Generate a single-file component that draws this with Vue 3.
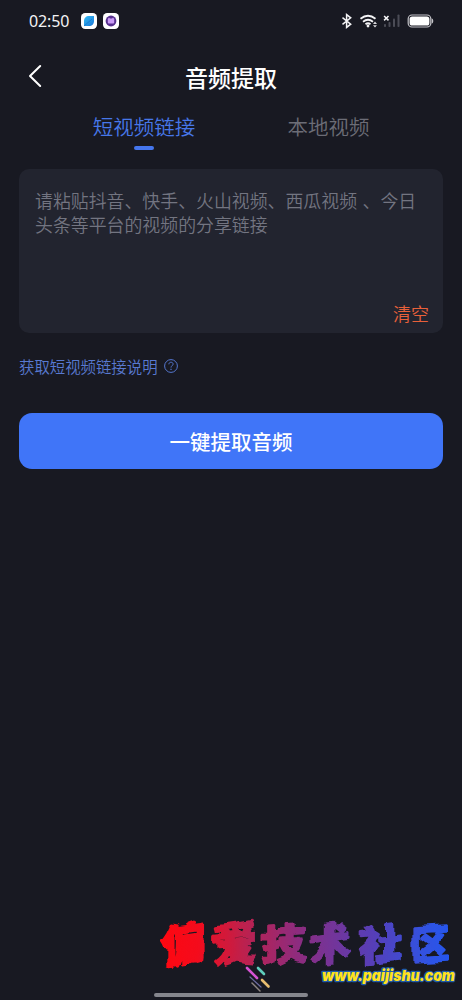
<script setup>
import { ref } from 'vue'

const tabs = ['短视频链接', '本地视频']
const active = ref(0)

// Each brush character rises to the right around its own centre.
const brand = [
  { char: '偏', x: 34, y: 51, size: 45, slope: -0.14 },
  { char: '爱', x: 85, y: 50, size: 45, slope: -0.1 },
  { char: '技', x: 133.5, y: 50, size: 43, slope: -0.08 },
  { char: '术', x: 180, y: 50, size: 42, slope: -0.12 },
  { char: '社', x: 231, y: 50, size: 42, slope: -0.1 },
  { char: '区', x: 280, y: 49, size: 39, slope: -0.06 },
].map((g) => ({ ...g, transform: `matrix(1 ${g.slope} 0 1 0 ${-g.slope * g.x})` }))
</script>

<template>
  <main class="screen">
    <div class="status">
      <span class="time">02:50</span>
      <svg class="app-icon" viewBox="0 0 16 16">
        <defs>
          <linearGradient id="leaf" x1="0" y1="0" x2="1" y2="1">
            <stop offset="0" stop-color="#35bdf4" /><stop offset="1" stop-color="#1976d8" />
          </linearGradient>
        </defs>
        <rect width="16" height="16" rx="4.2" fill="#fff" />
        <path d="M3 13V8C3 5 5 3 8 3h5v5c0 3-2 5-5 5H3z" fill="url(#leaf)" />
        <path d="M3 13L11 6" stroke="#1673cb" stroke-width=".7" />
      </svg>
      <svg class="app-icon" viewBox="0 0 16 16">
        <rect width="16" height="16" rx="4.2" fill="#fff" />
        <circle cx="8" cy="8" r="5.4" fill="#57308f" />
        <rect x="4.8" y="5.4" width="6.4" height="5" rx="1" fill="#c99af5" />
        <path d="M5 6l1-1.4 1 1.4h2l1-1.4 1 1.4" fill="#c99af5" />
      </svg>
      <svg class="system" viewBox="0 0 94 16">
        <path d="M2.5 4.6l8.2 6.6L6.6 14.4V1.6l4.1 3.2-8.2 6.6" fill="none" stroke="#f4f4f6" stroke-width="1.5" />
        <g fill="none" stroke="#f4f4f6" stroke-width="1.8">
          <path d="M20.5 5.8q7.5-6 15 0" />
          <path d="M23 8.7q5-4 10 0" />
          <path d="M25.5 11.3q2.5-2 5 0" />
        </g>
        <circle cx="28" cy="13" r="1.4" fill="#f4f4f6" />
        <path d="M33 11L35 8.6l2 2.4zM33 12.2l2 2.3 2-2.3z" fill="#d9d9dd" />
        <g fill="#4b4c56">
          <rect x="44" y="11" width="2" height="3" rx=".8" />
          <rect x="48.5" y="9" width="2" height="5" rx=".8" />
          <rect x="53" y="5.5" width="2" height="8.5" rx=".8" />
          <rect x="57.5" y="1.5" width="2" height="12.5" rx=".8" />
        </g>
        <path d="M44.1 3l4.4 4.4M48.5 3l-4.4 4.4" stroke="#f4f4f6" stroke-width="1.5" />
        <rect x="68.2" y="2" width="22.6" height="12" rx="3.8" fill="none" stroke="#c4c4c9" stroke-width="1.2" />
        <rect x="69.6" y="3.4" width="19.8" height="9.2" rx="2.6" fill="#fff" />
        <path d="M91.7 5.3q1.6.7 1.6 2.7t-1.6 2.7z" fill="#c4c4c9" />
      </svg>
    </div>

    <header class="header">
      <svg class="back" viewBox="0 0 14 24">
        <path d="M12.2 2L2 12l10.2 10" fill="none" stroke="#fff" stroke-width="2" stroke-linecap="round" stroke-linejoin="round" />
      </svg>
      <h1>音频提取</h1>
    </header>

    <nav class="tabs">
      <button v-for="(tab, i) in tabs" :key="tab" class="tab" :class="{ active: active === i }" @click="active = i">
        {{ tab }}
      </button>
    </nav>

    <section class="paste">
      <p>请粘贴抖音、快手、火山视频、西瓜视频 、今日<br />头条等平台的视频的分享链接</p>
      <button class="clear">清空</button>
    </section>

    <a class="help">
      <span>获取短视频链接说明</span>
      <svg viewBox="0 0 14 14" fill="none" stroke="#5577cf">
        <circle cx="7" cy="7" r="6.4" stroke-width="1" />
        <path d="M4.9 5.3C4.9 4 5.9 3.2 7 3.2s2.1.7 2.1 1.9c0 1.5-2.1 1.7-2.1 3.5" stroke-width="1" />
        <path d="M7 9.7v1.2" stroke-width="1.2" />
      </svg>
    </a>

    <button class="extract">一键提取音频</button>

    <svg class="watermark" viewBox="0 0 312 100">
      <defs>
        <linearGradient id="brand" gradientUnits="userSpaceOnUse" x1="10" y1="0" x2="300" y2="0">
          <stop offset="0" stop-color="#ff0710" />
          <stop offset=".13" stop-color="#f40b1c" />
          <stop offset=".28" stop-color="#bf204b" />
          <stop offset=".48" stop-color="#8c2c80" />
          <stop offset=".73" stop-color="#573eb7" />
          <stop offset=".9" stop-color="#3451df" />
          <stop offset="1" stop-color="#2456ee" />
        </linearGradient>
        <filter id="brush" x="-5%" y="-10%" width="110%" height="120%" color-interpolation-filters="sRGB">
          <feTurbulence type="fractalNoise" baseFrequency=".055" numOctaves="1" seed="4" />
          <feDisplacementMap in="SourceGraphic" scale="11" xChannelSelector="R" yChannelSelector="G" />
          <feGaussianBlur stdDeviation=".35" />
        </filter>
      </defs>
      <g transform="translate(0 10)">
        <g class="brand" fill="url(#brand)" stroke="url(#brand)" filter="url(#brush)">
          <text v-for="g in brand" :key="g.char" :x="g.x" :y="g.y" :font-size="g.size" :transform="g.transform">{{ g.char }}</text>
        </g>
        <g stroke-linecap="round">
          <path d="M97 58l10 10" stroke="#d653d4" stroke-width="2.6" />
          <path d="M108 58l6 6" stroke="#60cebc" stroke-width="2.6" />
          <path d="M112 70l6.5 6.5" stroke="#e8bd70" stroke-width="2.6" />
          <path d="M100 67l11 10" stroke="#6d6ca1" stroke-width="1.2" />
          <path d="M102 73l8 8" stroke="#8e8681" stroke-width="1.5" />
        </g>
        <text class="site" x="172" y="71" textLength="133" lengthAdjust="spacingAndGlyphs">www.paijishu.com</text>
      </g>
    </svg>
    <div class="home-bar"></div>
  </main>
</template>

<style>
body { margin: 0; background: #181922; }
</style>

<style scoped>
.screen {
  position: relative;
  box-sizing: border-box;
  width: 462px;
  height: 1000px;
  overflow: hidden;
  background: #181922;
  color: #fff;
  font-family: "Noto Sans CJK SC", sans-serif;
}
button { padding: 0; border: 0; background: none; font-family: inherit; }
.status { display: flex; align-items: center; height: 41px; padding: 0 28px 0 29px; }
.time { width: 52px; font: 400 16px/20px "Noto Sans", sans-serif; color: #f3f3f5; letter-spacing: -.1px; }
.app-icon { width: 16px; height: 16px; margin-right: 6px; }
.system { width: 94px; height: 16px; margin-left: auto; }
.header { position: relative; display: flex; align-items: center; justify-content: center; height: 71px; }
.back { position: absolute; left: 28px; top: 23px; width: 14px; height: 24px; }
h1 { margin: 0; font-size: 23px; line-height: 34px; font-weight: 500; }
.tabs { display: flex; height: 57px; padding: 0 35px 0 46px; }
.tab { position: relative; width: 196px; height: 28px; font-size: 20.5px; line-height: 28px; font-weight: 350; color: #6c6d77; }
.tab:last-child { width: 173px; }
.tab.active { color: #4777e9; }
.tab.active::after {
  content: "";
  position: absolute;
  left: 88px;
  top: 34px;
  width: 20px;
  height: 4px;
  border-radius: 2px;
  background: #4576ee;
}
.paste {
  display: flex;
  flex-direction: column;
  justify-content: space-between;
  box-sizing: border-box;
  height: 164px;
  margin: 0 19px;
  padding: 20px 14px 7px 16px;
  border-radius: 10px;
  background: #22242f;
}
.paste p { margin: 0; font-size: 17.9px; line-height: 23.5px; font-weight: 350; word-spacing: 1.5px; color: #737581; white-space: nowrap; }
.clear { align-self: flex-end; font-size: 18px; line-height: 26px; font-weight: 350; color: #e8603a; }
.help { display: flex; align-items: center; height: 24px; margin: 21px 19px 0; font-size: 15.4px; color: #5879d1; font-weight: 350; }
.help svg { width: 14px; height: 14px; margin-left: 6px; }
.extract {
  display: block;
  width: 424px;
  height: 56px;
  margin: 35px 19px 0;
  border-radius: 13px;
  background: #4075f8;
  color: #fff;
  font-size: 20.5px;
  line-height: 56px;
  font-weight: 500;
}
.watermark { position: absolute; left: 150px; top: 900px; width: 312px; height: 100px; }
.brand { font-family: "Noto Sans CJK SC", sans-serif; font-weight: 900; stroke-width: 2; stroke-linejoin: bevel; text-anchor: middle; }
.site {
  fill: #ffe21b;
  stroke: #1f5ca9;
  stroke-width: 2.6px;
  stroke-linejoin: round;
  paint-order: stroke;
  font: italic 900 15px Inter, sans-serif;
  font-feature-settings: "cv11";
}
.home-bar { position: absolute; left: 154px; top: 993px; width: 154px; height: 4px; border-radius: 2px; background: #85868d; }
</style>
